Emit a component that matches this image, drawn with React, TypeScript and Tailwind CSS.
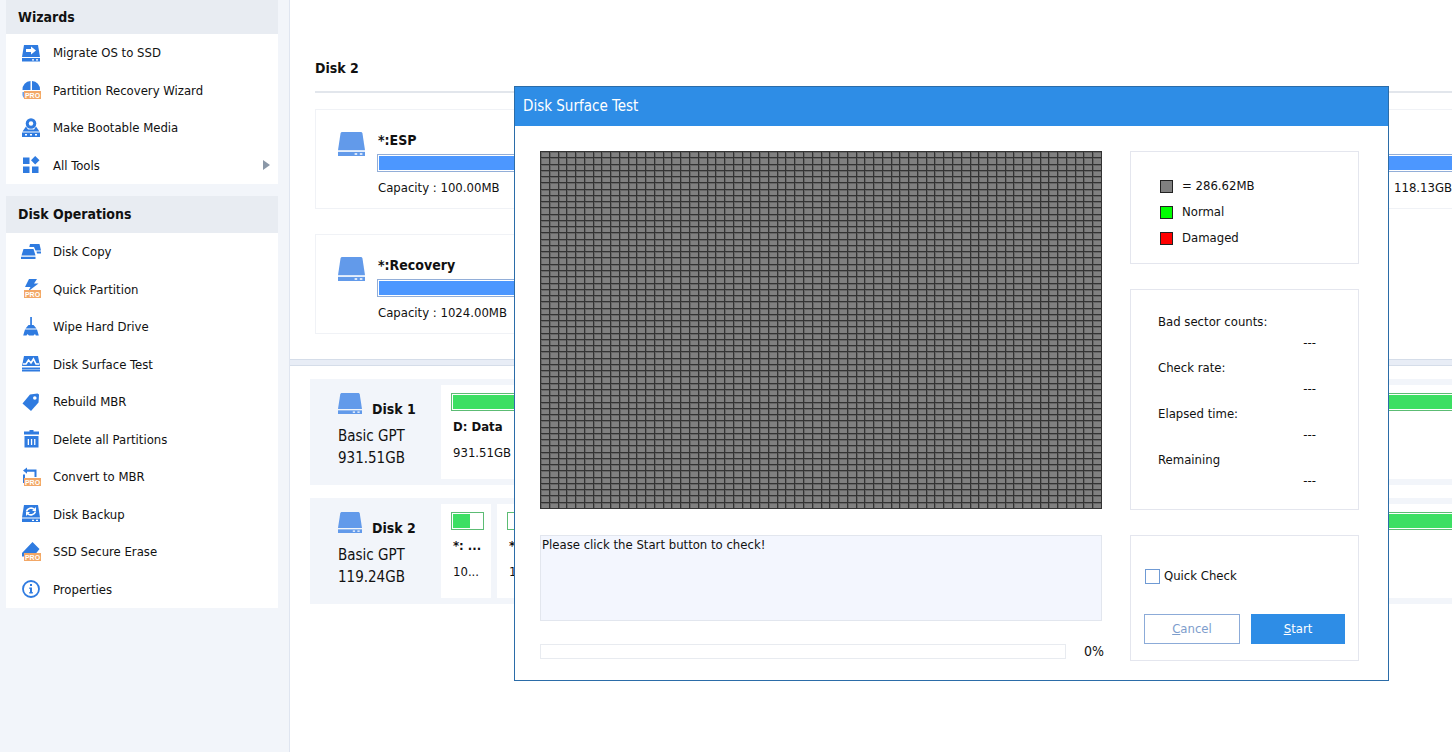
import type { ReactNode } from "react";

const BLUE = "#2f7be0";

const ProBadge = ({ y = 11 }: { y?: number }) => (
    <g>
        <rect x="3" y={y} width="17" height="8" fill="#f2a766" />
        <text
            x="11.5"
            y={y + 6.6}
            fill="#fff"
            fontSize="7"
            fontWeight="700"
            textAnchor="middle"
            fontFamily="Liberation Sans, sans-serif"
        >
            PRO
        </text>
    </g>
);

const Icon = ({ children }: { children: ReactNode }) => (
    <svg viewBox="0 0 20 20" className="h-5 w-5 shrink-0" fill={BLUE} aria-hidden="true">
        {children}
    </svg>
);

const icons = {
    migrate: (
        <Icon>
            <path d="M3 2h14l2 12H1z" />
            <path d="M5 6h5V3.500l5 4-5 4V9H5z" fill="#fff" />
            <path d="M1 15h18v3.500H1z" />
            <path d="M11 16.200h2v1.200h-2zM15 16.200h2v1.200h-2z" fill="#fff" />
        </Icon>
    ),
    recovery: (
        <Icon>
            <path d="M9.500 1v9H1.500A8.500 8.500 0 0 1 9.500 1zM11 1a8.500 8.500 0 0 1 8 9h-8z" />
            <path d="M1.500 12h4l-3 6A8 8 0 0 1 1.500 12z" opacity=".7" />
            <ProBadge />
        </Icon>
    ),
    bootable: (
        <Icon>
            <path d="M5 8.500 1.500 13.500h17L15 8.500l-2 3H7z" />
            <circle cx="10" cy="5.500" r="5.300" />
            <circle cx="10" cy="5.500" r="2.200" fill="#fff" />
            <path d="M1 14.500h18V19H1z" />
            <path d="M4 16h2v1.500H4zM9 16h2v1.500H9zM14 16h2v1.500h-2z" fill="#fff" />
        </Icon>
    ),
    tools: (
        <Icon>
            <path d="M2 2.500h6.500V9H2zM2 11.500h6.500V18H2zM11 11.500h6.500V18H11zM14.200 1l4.300 4.300-4.300 4.300L10 5.300z" />
        </Icon>
    ),
    copy: (
        <Icon>
            <path d="M9 2h9.500l1.500 6.500h-5.500L13 5H8.300zM15.500 9.500H20v2h-4z" />
            <path d="M2.500 7h10l2 6.500H.5zM0 14.700h14.500V17H0z" />
        </Icon>
    ),
    quick: (
        <Icon>
            <path d="M8 0h8l-3 4.500h4.500L7 12.500 9.500 8H4z" />
            <ProBadge />
        </Icon>
    ),
    wipe: (
        <Icon>
            <path d="M9.200 0h1.700v8h1.600l3 3.500H4.500l3-3.500h1.700zM4 12.500h12l1.800 6h-3L14 17l-1.500 1.500H8L6.500 17l-1 1.500H2.200z" />
        </Icon>
    ),
    surface: (
        <Icon>
            <path d="M3 2h14l2 10H1zM1 13.500h18v4H1z" />
            <path d="M2 10h3l2.500-4L10 9l2.500-4 2.500 5h3" fill="none" stroke="#fff" strokeWidth="1.600" />
            <path d="M1 15.200h18v.8H1z" fill="#9fc2f0" />
        </Icon>
    ),
    rebuild: (
        <Icon>
            <path d="M9 2.500 16.500 1.500l1.500 1-.5 8-7.500 8.500-8.500-7.500z" />
            <circle cx="13.800" cy="6" r="1.800" fill="#fff" />
        </Icon>
    ),
    trash: (
        <Icon>
            <path d="M8.500 1h4v1.500h5.500v3H3v-3h5.500zM3.500 7h14v11.500h-14z" />
            <path d="M6.700 10h1.300v6H6.700zM9.900 10h1.300v6H9.900zM13.100 10h1.300v6h-1.300z" fill="#fff" />
        </Icon>
    ),
    convert: (
        <Icon>
            <path d="M6 .5v2h9.500V10h-2V4.700H6v2L2 3.600zM2 7.500h2V14H2zM2 14h5v2H2z" />
            <ProBadge />
        </Icon>
    ),
    backup: (
        <Icon>
            <path d="M3 1h14l2 12.500H1z" />
            <path d="M5.500 7.500C6.500 4 11 3 13.500 5.500M14.500 7.500c-1 3.500-5.500 4.500-8 2" fill="none" stroke="#fff" strokeWidth="1.600" />
            <path d="M15 3v4h-4zM5 12V8h4z" fill="#fff" />
            <path d="M1 14.500h18V18H1z" />
            <path d="M11 15.700h2v1.200h-2zM15 15.700h2v1.200h-2z" fill="#fff" />
        </Icon>
    ),
    erase: (
        <Icon>
            <path d="M11.500 0l7 7-4 5H3v2.500H1V11z" />
            <ProBadge />
        </Icon>
    ),
    info: (
        <Icon>
            <circle cx="10" cy="10" r="8" fill="none" stroke={BLUE} strokeWidth="1.800" />
            <path d="M9 5h2v2H9zM8.300 8.500H11V13h.8v1.500H8.300V13H9v-3h-.7z" />
        </Icon>
    ),
};

const wizards = [
    { label: "Migrate OS to SSD", icon: icons.migrate },
    { label: "Partition Recovery Wizard", icon: icons.recovery },
    { label: "Make Bootable Media", icon: icons.bootable },
    { label: "All Tools", icon: icons.tools, submenu: true },
];

const operations = [
    { label: "Disk Copy", icon: icons.copy },
    { label: "Quick Partition", icon: icons.quick },
    { label: "Wipe Hard Drive", icon: icons.wipe },
    { label: "Disk Surface Test", icon: icons.surface },
    { label: "Rebuild MBR", icon: icons.rebuild },
    { label: "Delete all Partitions", icon: icons.trash },
    { label: "Convert to MBR", icon: icons.convert },
    { label: "Disk Backup", icon: icons.backup },
    { label: "SSD Secure Erase", icon: icons.erase },
    { label: "Properties", icon: icons.info },
];

type Item = { label: string; icon: ReactNode; submenu?: boolean };

const MenuList = ({ items, className }: { items: Item[]; className: string }) => (
    <ul className={`flex flex-col bg-white ${className}`}>
        {items.map((item) => (
            <li key={item.label} className="flex flex-1">
                <button type="button" className="flex flex-1 items-center gap-3 pr-2 pl-[15px] text-left">
                    {item.icon}
                    <span className="flex-1">{item.label}</span>
                    {item.submenu && (
                        <svg viewBox="0 0 7 10" className="h-[10px] w-[7px]" fill="#8b98a8" aria-hidden="true">
                            <path d="M0 0l7 5-7 5z" />
                        </svg>
                    )}
                </button>
            </li>
        ))}
    </ul>
);

const DriveIcon = ({ className }: { className: string }) => (
    <svg viewBox="0 0 26 23" className={className} fill="#629aea" preserveAspectRatio="none" aria-hidden="true">
        <path d="M3.500 0h19l1 1L26 17.500H0L2.500 1z" />
        <path d="M0 19h26v4H0z" />
        <path d="M16 20.300h2.500v1.400H16zM21 20.300h2.500v1.400H21z" fill="#fff" />
    </svg>
);

const PartitionCard = ({ name, capacity }: { name: string; capacity: string }) => (
    <section className="flex h-[100px] w-[500px] gap-3 border border-[#f0f2f6] pl-[22px] pt-[22px]">
        <DriveIcon className="h-6 w-[27px] shrink-0" />
        <div className="flex-1">
            <h3 className="h-[22px] pl-px text-sm font-bold leading-4">{name}</h3>
            <div className="h-[18px] border border-[#92aed8] p-px">
                <div className="h-full bg-[#4c97ff]" />
            </div>
            <p className="pt-[6px] pl-px leading-5">Capacity : {capacity}</p>
        </div>
    </section>
);

const UsageBar = ({ used }: { used: number }) => (
    <div className="h-[18px] border border-[#5cbc74] p-px">
        <div className="h-full bg-[#3cdf63]" style={{ width: `${used}%` }} />
    </div>
);

type PartitionProps = { name?: string; size?: string; used: number; className: string };

const Partition = ({ name, size, used, className }: PartitionProps) => (
    <div className={`bg-white pt-2 pl-[10px] ${className}`}>
        <UsageBar used={used} />
        {name && <p className="pt-[6px] pl-[2px] font-bold leading-5">{name}</p>}
        {size && <p className="pt-[6px] pl-[2px] leading-5">{size}</p>}
    </div>
);

const DiskRow = ({ name, size, children }: { name: string; size: string; children: ReactNode }) => (
    <section className="flex h-[106px] bg-[#f2f5fa] py-[6px]">
        <div className="w-[131px] shrink-0 pt-2 pl-7">
            <div className="flex h-6 items-end gap-[10px]">
                <DriveIcon className="h-[21px] w-6 self-start" />
                <h3 className="text-sm font-bold leading-4">{name}</h3>
            </div>
            <p className="pt-2 text-[15px] leading-[22px]">
                Basic GPT
                <br />
                {size}
            </p>
        </div>
        <div className="flex min-w-0 flex-1 gap-[6px]">{children}</div>
    </section>
);

const COLS = 64;
const ROWS = 57;
const MAP_W = 561;
const MAP_H = 357;

const colX = Array.from({ length: COLS + 1 }, (_, i) => Math.round((i * MAP_W) / COLS));
const rowY = Array.from({ length: ROWS + 1 }, (_, i) => Math.round((i * MAP_H) / ROWS));

const SectorMap = () => (
    <svg
        viewBox={`0 0 ${MAP_W + 1} ${MAP_H + 1}`}
        className="h-[358px] w-full"
        preserveAspectRatio="none"
        shapeRendering="crispEdges"
        role="img"
        aria-label="Sector map"
    >
        <rect width={MAP_W + 1} height={MAP_H + 1} fill="#808080" />
        <path d={colX.map((x) => `M${x + 1} 0h1v${MAP_H}h-1z`).join("")} fill="#666" />
        <path d={rowY.map((y) => `M0 ${y + 1}h${MAP_W}v1H0z`).join("")} fill="#666" />
        <path d={colX.map((x) => `M${x} 0h1v${MAP_H + 1}h-1z`).join("")} fill="#333" />
        <path d={rowY.map((y) => `M0 ${y}h${MAP_W + 1}v1H0z`).join("")} fill="#333" />
    </svg>
);

const legend = [
    { label: "= 286.62MB", color: "bg-[#808080]" },
    { label: "Normal", color: "bg-[#00ff00]" },
    { label: "Damaged", color: "bg-[#ff0000]" },
];

const stats = ["Bad sector counts:", "Check rate:", "Elapsed time:", "Remaining"];

const SurfaceTestDialog = () => (
    <div
        role="dialog"
        aria-labelledby="dialog-title"
        className="absolute left-[514px] top-[86px] w-[875px] border border-[#2b6ca8] bg-white"
    >
        <h2 id="dialog-title" className="h-[39px] bg-[#2e8de6] px-2 text-[15px] leading-[39px] text-white">
            Disk Surface Test
        </h2>
        <div className="flex gap-7 pt-[25px] pr-[29px] pb-[19px] pl-[25px]">
            <div className="flex-1">
                <SectorMap />
                <p className="mt-[26px] h-[86px] border border-[#e2e6ee] bg-[#f3f6fe] pl-px leading-[18px]">
                    Please click the Start button to check!
                </p>
                <div className="mt-[22px] flex items-center gap-[18px]">
                    <div role="progressbar" aria-valuenow={0} className="h-[15px] flex-1 border border-[#e8ebf0]" />
                    <span className="-mr-[2px] text-sm leading-4">0%</span>
                </div>
            </div>
            <div className="flex w-[229px] flex-col gap-[25px]">
                <ul className="h-[113px] border border-[#e4e6ee] pt-[21px] pl-[29px]">
                    {legend.map(({ label, color }) => (
                        <li key={label} className="flex h-[26px] items-center gap-[9px]">
                            <span className={`h-[13px] w-[13px] border border-[#222] ${color}`} />
                            {label}
                        </li>
                    ))}
                </ul>
                <dl className="h-[221px] border border-[#e4e6ee] pt-[22px] pr-[42px] pl-[27px]">
                    {stats.map((label) => (
                        <div key={label} className="h-[46px]">
                            <dt className="leading-5">{label}</dt>
                            <dd className="text-right leading-[22px]">---</dd>
                        </div>
                    ))}
                </dl>
                <div className="h-[126px] border border-[#e4e6ee] px-[13px] pt-[30px]">
                    <label className="flex h-5 items-center gap-1 pl-px">
                        <input type="checkbox" className="h-[15px] w-[15px] appearance-none border border-[#6f9ad4] bg-white" />
                        Quick Check
                    </label>
                    <div className="flex gap-[11px] pt-7">
                        <button type="button" className="h-[30px] flex-1 border border-[#8cabd8] text-[#7d9dcc]">
                            <span className="underline">C</span>ancel
                        </button>
                        <button type="button" className="h-[30px] flex-1 bg-[#2e8de6] text-white">
                            <span className="underline">S</span>tart
                        </button>
                    </div>
                </div>
            </div>
        </div>
    </div>
);

const App = () => {
    return (
        <div className="relative flex min-h-screen overflow-hidden bg-white font-['DejaVu_Sans_Condensed','Noto_Sans',sans-serif] text-[13px] text-[#111]">
            <aside className="w-[290px] shrink-0 border-r border-[#dfe5f0] bg-[#f2f5fa] pr-[11px] pl-[6px]">
                <h2 className="h-[34px] bg-[#e8ecf2] pl-3 text-sm font-bold leading-[34px]">Wizards</h2>
                <MenuList items={wizards} className="h-[150px]" />
                <h2 className="mt-3 h-[37px] bg-[#e8ecf2] pl-3 text-sm font-bold leading-[37px]">Disk Operations</h2>
                <MenuList items={operations} className="h-[375px]" />
            </aside>

            <main className="min-w-0 flex-1">
                <div className="h-[359px] pt-[58px] pl-[25px]">
                    <h2 className="h-[33px] text-sm font-bold leading-5">Disk 2</h2>
                    <div className="h-[2px] bg-[#e2e6ec]" />
                    <div className="flex flex-col gap-[25px] pt-4">
                        <div className="flex gap-6">
                            <PartitionCard name="*:ESP" capacity="100.00MB" />
                            {/* the system partition runs past the right edge */}
                            <section className="h-[100px] min-w-0 flex-1 border-y border-l border-[#f0f2f6] pt-11 pl-[22px]">
                                <div className="h-[18px] border-y border-[#92aed8] py-px">
                                    <div className="h-full bg-[#4c97ff]" />
                                </div>
                                <p className="pt-[6px] text-right leading-5">118.13GB</p>
                            </section>
                        </div>
                        <PartitionCard name="*:Recovery" capacity="1024.00MB" />
                    </div>
                </div>
                <div className="h-[7px] border-y border-[#d5dde9] bg-[#e8edf6]" />
                <div className="flex flex-col gap-[13px] pt-[13px] pl-5">
                    <DiskRow name="Disk 1" size="931.51GB">
                        <Partition name="D: Data" size="931.51GB" used={100} className="-mr-3 flex-1" />
                    </DiskRow>
                    <DiskRow name="Disk 2" size="119.24GB">
                        <Partition name="*: ..." size="10..." used={60} className="w-[50px] shrink-0 pr-[7px]" />
                        <Partition name="*:" size="16" used={0} className="w-[50px] shrink-0 pr-[7px]" />
                        <Partition used={100} className="-mr-3 flex-1" />
                    </DiskRow>
                </div>
            </main>

            <SurfaceTestDialog />
        </div>
    );
};

export default App;
